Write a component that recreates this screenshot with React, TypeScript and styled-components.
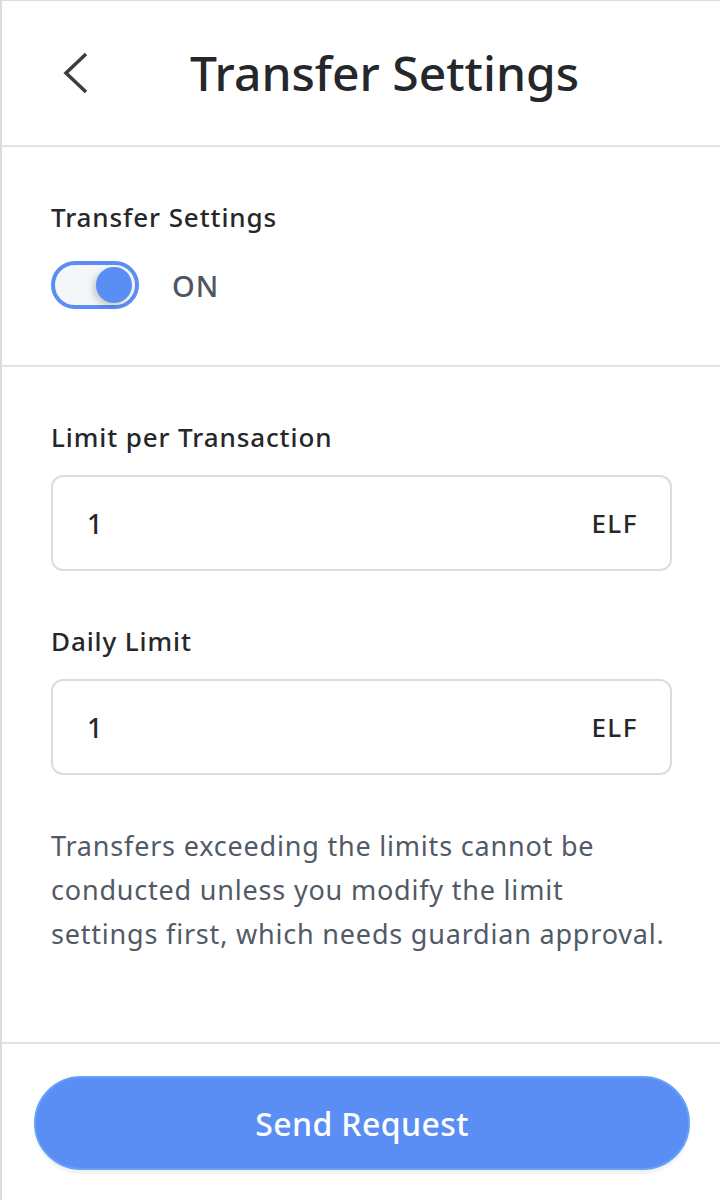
import React, { useState } from "react";
import styled, { createGlobalStyle } from "styled-components";

const GlobalStyle = createGlobalStyle`
  html, body {
    margin: 0;
    padding: 0;
    background: #ffffff;
  }
  body {
    font-family: "Noto Sans", Lato, sans-serif;
    color: #25272a;
  }
  * { box-sizing: border-box; }
`;

const Page = styled.div`
  width: 720px;
  min-height: 1200px;
  border-top: 1px solid #dcdcdc;
  border-left: 2px solid #dcdcdc;
  display: flex;
  flex-direction: column;
`;

const Header = styled.header`
  height: 146px;
  display: flex;
  align-items: center;
  padding-left: 58px;
  border-bottom: 2px solid #e2e3ea;
`;

const BackButton = styled.button`
  border: none;
  background: none;
  padding: 0;
  width: 30px;
  height: 44px;
  display: flex;
  align-items: center;
  cursor: pointer;
`;

const Title = styled.h1`
  margin: 0 0 0 100px;
  font-size: 48px;
  font-weight: 500;
  color: #25272a;
  line-height: 56px;
`;

const Section = styled.section<{ $grow?: boolean }>`
  padding: 52px 48px 56px 49px;
  border-bottom: 2px solid #e2e3ea;
  display: flex;
  flex-direction: column;
  ${(p) => (p.$grow ? "flex: 1;" : "")}
`;

const Label = styled.div`
  font-size: 26px;
  font-weight: 500;
  line-height: 36px;
  letter-spacing: 0.9px;
  color: #25272a;
`;

const ToggleRow = styled.div`
  display: flex;
  align-items: center;
  gap: 33px;
  margin-top: 26px;
`;

const Switch = styled.button<{ $on: boolean }>`
  width: 88px;
  height: 48px;
  border-radius: 24px;
  border: 4px solid #5b8ef4;
  background: #f4f6f8;
  display: flex;
  align-items: center;
  justify-content: ${(p) => (p.$on ? "flex-end" : "flex-start")};
  padding: 0 3px;
  cursor: pointer;
`;

const Knob = styled.span`
  width: 36px;
  height: 36px;
  border-radius: 50%;
  background: #5b8ef4;
  box-shadow: -3px 3px 6px rgba(0, 0, 0, 0.18);
`;

const ToggleText = styled.span`
  font-size: 29px;
  font-weight: 500;
  color: #4f5661;
  letter-spacing: 1px;
`;

const Field = styled.div`
  margin-top: 20px;
  margin-bottom: 52px;
  height: 96px;
  border: 2px solid #dcdcdc;
  border-radius: 12px;
  display: flex;
  align-items: center;
  padding: 0 32px 0 34px;
`;

const Value = styled.span`
  flex: 1;
  font-size: 27px;
  font-weight: 500;
  color: #25272a;
`;

const Unit = styled.span`
  font-size: 26px;
  font-weight: 500;
  color: #25272a;
  letter-spacing: 1.5px;
`;

const Note = styled.p`
  margin: -3px -20px 0 0;
  font-size: 27px;
  line-height: 44px;
  letter-spacing: 0.8px;
  color: #515a66;
`;

const Footer = styled.footer`
  padding: 32px 30px 30px 32px;
`;

const PrimaryButton = styled.button`
  width: 100%;
  height: 94px;
  border-radius: 47px;
  border: 2px solid #65a0fb;
  background: #5b8ef4;
  color: #ffffff;
  font-family: "Noto Sans", Lato, sans-serif;
  font-size: 32px;
  font-weight: 500;
  letter-spacing: 0.4px;
  box-shadow: 0 4px 2px rgba(0, 0, 0, 0.05);
  cursor: pointer;
`;

const ChevronLeft = () => (
  <svg width="30" height="44" viewBox="0 0 30 44" fill="none">
    <path d="M26 3 L6 22 L26 41" stroke="#3a3d42" strokeWidth="3.5" strokeLinejoin="miter" />
  </svg>
);

const LimitField = ({ label, value, unit }: { label: string; value: string; unit: string }) => (
  <>
    <Label>{label}</Label>
    <Field>
      <Value>{value}</Value>
      <Unit>{unit}</Unit>
    </Field>
  </>
);

export default function App() {
  const [on, setOn] = useState(true);
  return (
    <>
      <GlobalStyle />
      <Page>
        <Header>
          <BackButton aria-label="Back">
            <ChevronLeft />
          </BackButton>
          <Title>Transfer Settings</Title>
        </Header>
        <Section>
          <Label>Transfer Settings</Label>
          <ToggleRow>
            <Switch $on={on} onClick={() => setOn(!on)}>
              <Knob />
            </Switch>
            <ToggleText>{on ? "ON" : "OFF"}</ToggleText>
          </ToggleRow>
        </Section>
        <Section $grow>
          <LimitField label="Limit per Transaction" value="1" unit="ELF" />
          <LimitField label="Daily Limit" value="1" unit="ELF" />
          <Note>
            Transfers exceeding the limits cannot be
            <br />
            conducted unless you modify the limit
            <br />
            settings first, which needs guardian approval.
          </Note>
        </Section>
        <Footer>
          <PrimaryButton>Send Request</PrimaryButton>
        </Footer>
      </Page>
    </>
  );
}
